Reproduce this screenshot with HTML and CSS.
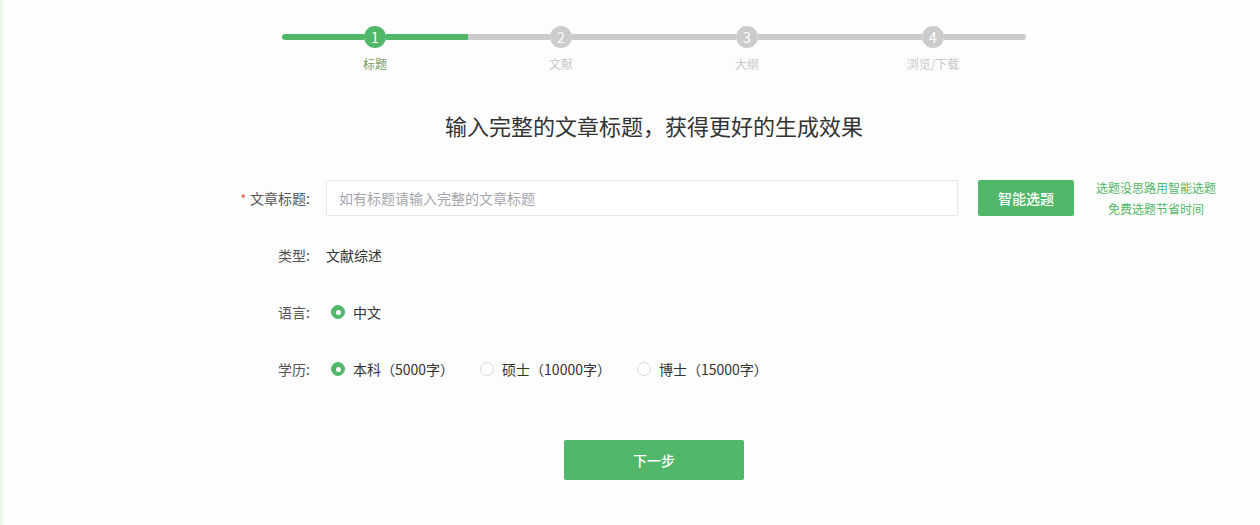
FILE: index.html
```html
<!DOCTYPE html>
<html lang="zh-CN">
<head>
<meta charset="utf-8">
<title>文章标题</title>
<link rel="stylesheet" href="styles.css">
</head>
<body>
<div class="page">
  <div class="strip"></div>
  <main class="main">
    <div class="steps">
      <div class="step done">
        <div class="step-head"><span class="seg seg-first"></span><span class="dot">1</span><span class="seg"></span></div>
        <div class="step-label">标题</div>
      </div>
      <div class="step">
        <div class="step-head"><span class="seg"></span><span class="dot">2</span><span class="seg"></span></div>
        <div class="step-label">文献</div>
      </div>
      <div class="step">
        <div class="step-head"><span class="seg"></span><span class="dot">3</span><span class="seg"></span></div>
        <div class="step-label">大纲</div>
      </div>
      <div class="step">
        <div class="step-head"><span class="seg"></span><span class="dot">4</span><span class="seg seg-last"></span></div>
        <div class="step-label">浏览/下载</div>
      </div>
    </div>

    <h1 class="title">输入完整的文章标题，获得更好的生成效果</h1>

    <div class="form">
      <div class="row">
        <label class="label"><span class="req">*</span>文章标题:</label>
        <div class="input">如有标题请输入完整的文章标题</div>
        <button class="btn-smart">智能选题</button>
        <div class="tip">选题没思路用智能选题<br>免费选题节省时间</div>
      </div>
      <div class="row">
        <label class="label">类型:</label>
        <div class="value">文献综述</div>
      </div>
      <div class="row">
        <label class="label">语言:</label>
        <div class="radios">
          <span class="radio checked"><span class="circle"></span>中文</span>
        </div>
      </div>
      <div class="row">
        <label class="label">学历:</label>
        <div class="radios">
          <span class="radio checked"><span class="circle"></span>本科（5000字）</span>
          <span class="radio"><span class="circle"></span>硕士（10000字）</span>
          <span class="radio"><span class="circle"></span>博士（15000字）</span>
        </div>
      </div>
    </div>

    <div class="actions">
      <button class="btn-next">下一步</button>
    </div>
  </main>
</div>
</body>
</html>
```

FILE: styles.css
```css
* { box-sizing: border-box; }
html, body { margin: 0; padding: 0; }
body {
  font-family: "Noto Sans CJK SC", "Noto Sans", sans-serif;
  background: #fdfdfd;
  color: #333;
}
.page { display: flex; min-height: 525px; }
.strip { width: 3px; background: #ecfaec; flex: none; }
.main { flex: 1; padding-left: 45px; padding-top: 26px; }

.steps { width: 744px; margin: 0 auto; display: flex; }
.step { width: 186px; display: flex; flex-direction: column; align-items: center; }
.step-head { width: 100%; display: flex; align-items: center; height: 22px; }
.seg { flex: 1; height: 6px; background: #cccccc; }
.seg-first { border-radius: 3px 0 0 3px; }
.seg-last { border-radius: 0 3px 3px 0; }
.dot {
  width: 22px; height: 22px; border-radius: 50%;
  background: #cccccc; color: #fff;
  font-size: 14px; line-height: 22px; text-align: center;
  flex: none;
}
.step.done .seg, .step.done .dot { background: #52b869; }
.step-label { margin-top: 8px; font-size: 12px; line-height: 16px; color: #c8c8c8; }
.step.done .step-label { color: #789a62; }

.title {
  margin: 38px 0 0; text-align: center;
  font-size: 22px; line-height: 30px; font-weight: 400; color: #333;
}

.form { margin: 40px 0 0 182px; display: flex; flex-direction: column; gap: 21px; }
.row { display: flex; align-items: center; height: 36px; }
.label {
  width: 84px; flex: none; text-align: right;
  font-size: 14px; color: #555;
  margin-right: 16px; margin-left: -4px;
}
.req { color: #f0433a; font-size: 12px; margin-right: 4px; }
.input {
  width: 632px; height: 36px; border: 1px solid #e2e9f1; border-radius: 2px;
  background: #fff; padding: 0 12px;
  font-size: 14px; line-height: 34px; color: #a3a6ad;
}
.btn-smart {
  margin-left: 20px; width: 96px; height: 36px; border: 0; border-radius: 2px;
  background: #52b869; color: #fff; font-family: inherit;
  font-size: 14px; font-weight: 500;
}
.tip {
  margin-left: 22px; font-size: 12px; line-height: 21px;
  color: #52b869; text-align: center;
}
.value { font-size: 14px; color: #333; }
.radios { display: flex; align-items: center; margin-left: 5px; }
.radio { display: flex; align-items: center; font-size: 14px; color: #333; margin-right: 26px; }
.circle {
  width: 14px; height: 14px; border-radius: 50%;
  border: 1px solid #d8dbe2; background: #fff;
  margin-right: 8px; display: flex; align-items: center; justify-content: center;
}
.radio.checked .circle { background: #52b869; border-color: #52b869; }
.radio.checked .circle::after {
  content: ""; width: 5px; height: 5px; border-radius: 50%; background: #fff;
}

.actions { display: flex; justify-content: center; margin-top: 53px; }
.btn-next {
  width: 180px; height: 40px; border: 0; border-radius: 2px;
  background: #52b869; color: #fff; font-family: inherit;
  font-size: 14px; font-weight: 500;
}
```
